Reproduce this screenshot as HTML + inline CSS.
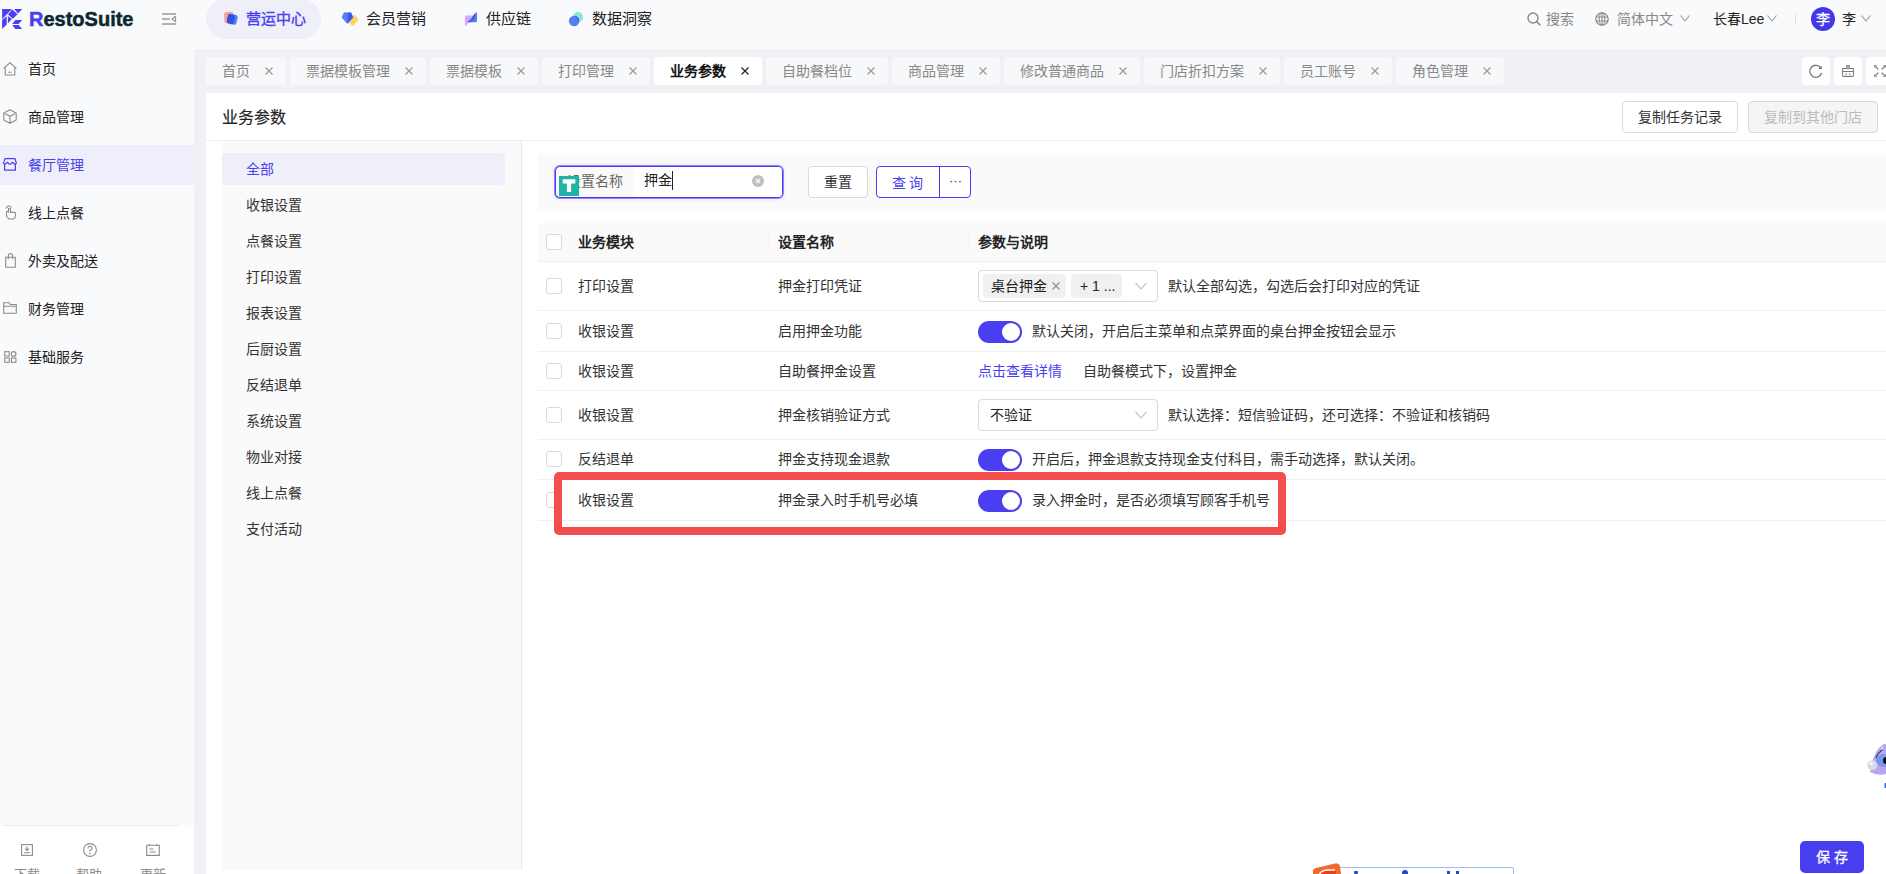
<!DOCTYPE html>
<html lang="zh-CN"><head><meta charset="utf-8">
<style>
*{box-sizing:border-box;margin:0;padding:0}
html,body{width:1886px;height:874px;overflow:hidden}
body{position:relative;background:#f9fafc;font-family:"Liberation Sans",sans-serif;font-size:14px;color:#333;line-height:20px}
.a{position:absolute;white-space:nowrap}
svg{position:absolute;overflow:visible}
/* header */
.logo-t{left:29px;top:6px;font-size:20px;font-weight:bold;color:#0b2730;line-height:26px;letter-spacing:0px;-webkit-text-stroke:0.5px #0b2730}
.logo-t b{-webkit-text-stroke:0.5px #4a3df2}
.logo-t b{color:#4a3ff0}
.pill{left:206px;top:-1px;width:115px;height:40px;border-radius:20px;background:#efeffa}
.nav{top:8px;font-size:15px;line-height:22px;color:#222}
.hr{top:9px;font-size:14px;line-height:20px;color:#888}
/* sidebar */
.side{left:0;top:49px;width:194px;height:776px;background:#f9fafc}
.sitem{left:0;width:194px;height:40px}
.sitem.sel{background:#eeeffb}
.stxt{left:28px;top:10px;font-size:14px;line-height:20px;color:#222}
.sel .stxt{color:#4a3ff0}
/* tabs */
.tabbar{left:194px;top:49px;width:1692px;height:825px;background:#f0f1f5}
.tab{top:57px;height:28px;border-radius:4px;background:#f7f8fa;color:#888;font-size:14px;line-height:28px;padding-left:16px}
.tab.act{background:#fff;color:#111;font-weight:bold}
.tab i{position:absolute;right:13px;top:10px;width:8px;height:8px}
.tool{top:57px;width:28px;height:28px;border-radius:4px;background:#fff}
/* card */
.card{left:206px;top:93px;width:1680px;height:781px;background:#fff;border-radius:4px 0 0 0}
.title{left:222px;top:107px;font-size:16px;line-height:22px;color:#222;-webkit-text-stroke:0.2px #222}
.btn{height:32px;border:1px solid #d9d9d9;border-radius:4px;background:#fff;font-size:14px;line-height:31px;text-align:center;color:#333}
.hline{left:206px;top:140px;width:1680px;height:1px;background:#eeeeee}
.panel{left:222px;top:141px;width:299px;height:729px;background:#fafafa}
.vline{left:521px;top:141px;width:1px;height:729px;background:#e8e8e8}
.cat{left:222px;width:283px;height:32px;border-radius:4px}
.cat.sel{background:#efeffa}
.cat span{position:absolute;left:24px;top:6px;font-size:14px;line-height:20px;color:#333}
.cat.sel span{color:#4a3ff0}
/* filter */
.filter{left:538px;top:153px;width:1348px;height:58px;background:#fafafa;border-radius:4px 0 0 4px}
/* table */
.thead{left:538px;top:223px;width:1348px;height:38px;background:#fafafa;border-radius:4px 0 0 0}
.rline{left:538px;width:1348px;height:1px;background:#efefef}
.cb{width:16px;height:16px;border:1px solid #d9d9d9;border-radius:3px;background:#fff}
.th{font-weight:bold;color:#222}
.td{color:#333}
.sw{left:978px;width:44px;height:22px;border-radius:11px;background:#4a3ff0}
.sw::after{content:"";position:absolute;right:2px;top:2px;width:18px;height:18px;border-radius:50%;background:#fff}
.sel2{left:978px;width:180px;height:32px;border:1px solid #d9d9d9;border-radius:4px;background:#fff}
</style></head><body>

<!-- ===== HEADER ===== -->
<svg style="left:0;top:0" width="30" height="40" viewBox="0 0 30 40">
  <g fill="#4a3df2">
  <path d="M2.1 9H11.9L2.1 19.3Z"/>
  <path d="M14.1 9H22.1L18.1 13.5Z"/>
  <path d="M12.2 9.5L17.6 14.3L12.8 18.8L8 14.5Z"/>
  <path d="M2.1 20.1L6.7 16.2V24.6L2.1 29Z"/>
  <path d="M7.85 15.9L11.86 19.1L7.85 23.6Z"/>
  <path d="M12.2 23.9L15.4 19.9H22.1L18.6 23.9Z"/>
  <path d="M12.2 25H18.6L22.1 28.9H15.4Z"/>
  </g>
</svg>
<div class="a logo-t"><b>R</b>estoSuite</div>
<svg style="left:162px;top:13px" width="14" height="12" viewBox="0 0 14 12">
  <path d="M0 1H14M0 6H8M0 11H14" stroke="#999" stroke-width="1.3" fill="none"/>
  <path d="M13.5 3.5L10 6L13.5 8.5Z" stroke="#999" stroke-width="1.2" fill="none"/>
</svg>

<div class="a pill"></div>
<svg style="left:224px;top:11px" width="16" height="16" viewBox="0 0 16 16">
  <rect x="0.2" y="0.8" width="9.4" height="11.4" rx="2.4" fill="#f9a193" transform="rotate(-4 5 6.5)"/>
  <rect x="3.6" y="3.5" width="9.6" height="9.8" rx="2.4" fill="#5a7cf4" transform="rotate(12 8.4 8.4)"/>
  <rect x="3.2" y="3.4" width="7.2" height="9.8" rx="2.2" fill="#2f52e6" transform="rotate(12 8.4 8.4)"/>
</svg>
<div class="a nav" style="left:246px;color:#4a3ff0;-webkit-text-stroke:0.35px #4a3ff0">营运中心</div>
<svg style="left:342px;top:12px" width="17" height="15" viewBox="0 0 17 15">
  <path d="M12.9 2.9L16.2 7.7L10.5 13.9L7.2 10.3Z" fill="#fdd25a" stroke="#fdd25a" stroke-width="0.6" stroke-linejoin="round"/>
  <path d="M2 0.7H9L11 5.5L5.3 11.6L0 5.5Z" fill="#5a7cf4" stroke="#5a7cf4" stroke-width="0.6" stroke-linejoin="round"/>
  <path d="M6 1L9 0.7L11 5.5L5.3 11.6Z" fill="#3c58ea"/>
</svg>
<div class="a nav" style="left:366px">会员营销</div>
<svg style="left:464px;top:11px" width="15" height="16" viewBox="0 0 15 16">
  <path d="M1 5.6Q1 4.6 2 4.6H8.5L2.6 14.2Q1.8 15.4 1.3 14.3Q1 13.8 1 13Z" fill="#d7a6f6"/>
  <path d="M11.8 1.8Q13 0.7 13 2.5V9.8Q13 11.3 11.5 11.3H4.6Q3 11.3 4.2 10.2Z" fill="#5a7cf4"/>
  <path d="M11.8 1.8L8.5 4.9Q9.5 7 6.5 9.5L4.2 10.2Q3 11.3 4.6 11.3H6Q9 11 10 8Z" fill="#2f52e6" opacity="0.85"/>
</svg>
<div class="a nav" style="left:486px">供应链</div>
<svg style="left:569px;top:12px" width="16" height="16" viewBox="0 0 16 16">
  <circle cx="9" cy="5.1" r="5.1" fill="#8be6d9"/>
  <circle cx="5.1" cy="8.95" r="5.2" fill="#5a7cf4"/>
  <path d="M4.3 3.8A5.1 5.1 0 0 1 9 10.2 A5.2 5.2 0 0 0 10.1 8 A5.1 5.1 0 0 0 4.3 3.8Z" fill="#2f52e6"/>
</svg>
<div class="a nav" style="left:592px">数据洞察</div>

<svg style="left:1527px;top:12px" width="14" height="14" viewBox="0 0 14 14">
  <circle cx="6" cy="6" r="5" stroke="#888" stroke-width="1.4" fill="none"/>
  <path d="M9.6 9.6L13.3 13.3" stroke="#888" stroke-width="1.5"/>
</svg>
<div class="a hr" style="left:1546px">搜索</div>
<svg style="left:1595px;top:12px" width="14" height="14" viewBox="0 0 14 14">
  <circle cx="7" cy="7" r="6.2" stroke="#888" stroke-width="1.2" fill="none"/>
  <ellipse cx="7" cy="7" rx="2.8" ry="6.2" stroke="#888" stroke-width="1" fill="none"/>
  <path d="M1 5H13M1 9H13M7 1V13" stroke="#888" stroke-width="1" fill="none"/>
</svg>
<div class="a hr" style="left:1617px">简体中文</div>
<svg style="left:1680px;top:15px" width="10" height="7" viewBox="0 0 10 7"><path d="M0.5 0.5L5 6L9.5 0.5" stroke="#999" stroke-width="1.1" fill="none"/></svg>
<div class="a hr" style="left:1713px;color:#222">长春Lee</div>
<svg style="left:1767px;top:15px" width="10" height="7" viewBox="0 0 10 7"><path d="M0.5 0.5L5 6L9.5 0.5" stroke="#999" stroke-width="1.1" fill="none"/></svg>
<div class="a" style="left:1795px;top:13px;width:1px;height:12px;background:#e2e2e2"></div>
<div class="a" style="left:1811px;top:7px;width:24px;height:24px;border-radius:50%;background:#4338e8"></div>
<div class="a" style="left:1816px;top:9px;font-size:14px;line-height:20px;color:#fff;-webkit-text-stroke:0.3px #fff">李</div>
<div class="a hr" style="left:1842px;color:#222">李</div>
<svg style="left:1861px;top:15px" width="10" height="7" viewBox="0 0 10 7"><path d="M0.5 0.5L5 6L9.5 0.5" stroke="#999" stroke-width="1.1" fill="none"/></svg>

<!-- ===== SIDEBAR ===== -->
<div class="a side"></div>
<div class="a sitem" style="top:49px"><div class="a stxt">首页</div></div>
<div class="a sitem" style="top:97px"><div class="a stxt">商品管理</div></div>
<div class="a sitem sel" style="top:145px"><div class="a stxt">餐厅管理</div></div>
<div class="a sitem" style="top:193px"><div class="a stxt">线上点餐</div></div>
<div class="a sitem" style="top:241px"><div class="a stxt">外卖及配送</div></div>
<div class="a sitem" style="top:289px"><div class="a stxt">财务管理</div></div>
<div class="a sitem" style="top:337px"><div class="a stxt">基础服务</div></div>
<div class="a" style="left:0;top:825px;width:194px;height:49px;background:#fff"></div>
<div class="a" style="left:2px;top:825px;width:176px;height:1px;background:#ececec"></div>
<svg style="left:3px;top:62px" width="14" height="14" viewBox="0 0 14 14"><g stroke="#8c8c8c" stroke-width="1.1" fill="none"><path d="M0.6 6.3L7 0.8L13.4 6.3M2.2 5V13H11.8V5M5.3 10.3H8.7"/></g></svg>
<svg style="left:3px;top:109px" width="14" height="15" viewBox="0 0 14 15"><g stroke="#8c8c8c" stroke-width="1.1" fill="none"><path d="M7 0.7L13.2 4V11L7 14.3L0.8 11V4Z M0.8 4L7 7.3L13.2 4 M7 7.3V14.3"/></g></svg>
<svg style="left:3px;top:157px" width="14" height="15" viewBox="0 0 14 15"><g stroke="#4a3ff0" stroke-width="1.2" fill="none" stroke-linejoin="round"><path d="M1.2 5L1.6 2.4Q1.8 1.6 2.6 1.6H11.4Q12.2 1.6 12.4 2.4L12.8 5 M1.2 5Q0 5.5 0.7 6.5Q1.5 7.4 2.5 7L4.4 5.3L6.2 7Q6.9 7.5 7.6 7L9.4 5.3L11.3 7Q12.3 7.4 13.1 6.5Q13.8 5.5 12.8 5 M1.6 7V13.2H12.4V7"/></g></svg>
<svg style="left:5px;top:205px" width="12" height="15" viewBox="0 0 12 15"><g stroke="#8c8c8c" stroke-width="1.1" fill="none"><path d="M1 3.5A3 3 0 0 1 6.5 2.5 M3.5 13.5Q1.5 12 1.5 9.5V6.5Q2.5 5.8 3.5 6.8V3.8Q4.5 3 5.5 3.8V7.5Q8 6.5 10.5 8V10.5Q10.5 13 8.5 14H4Z"/></g></svg>
<svg style="left:5px;top:253px" width="11" height="15" viewBox="0 0 11 15"><g stroke="#8c8c8c" stroke-width="1.1" fill="none"><path d="M0.7 4.3H10.3V14.2H0.7Z M3.3 6.3V2.7A2.2 2.2 0 0 1 7.7 2.7V6.3"/></g></svg>
<svg style="left:3px;top:302px" width="14" height="12" viewBox="0 0 14 12"><g stroke="#8c8c8c" stroke-width="1.1" fill="none"><path d="M0.7 0.8H6L7.3 2.5H13.3V11.2H0.7Z M0.7 4.3H13.3"/></g></svg>
<svg style="left:4px;top:351px" width="13" height="12" viewBox="0 0 13 12"><g stroke="#8c8c8c" stroke-width="1.1" fill="none"><rect x="0.7" y="0.7" width="4.5" height="4.3"/><circle cx="9.6" cy="2.9" r="2.3"/><rect x="0.7" y="7" width="4.5" height="4.3"/><rect x="7.4" y="7" width="4.5" height="4.3"/></g></svg>
<svg style="left:21px;top:844px" width="12" height="12" viewBox="0 0 12 12"><g stroke="#8c8c8c" stroke-width="1.1" fill="none"><rect x="0.6" y="0.6" width="10.8" height="10.8"/><path d="M6 2.5V6.3M4 4.6L6 6.5L8 4.6M3 8.8H9"/></g></svg>
<svg style="left:83px;top:843px" width="14" height="14" viewBox="0 0 14 14"><g stroke="#8c8c8c" stroke-width="1.1" fill="none"><circle cx="7" cy="7" r="6.4"/><path d="M5 5.3A2 2 0 1 1 7 7.2V8.6"/></g><circle cx="7" cy="10.6" r="0.8" fill="#8c8c8c"/></svg>
<svg style="left:146px;top:844px" width="14" height="12" viewBox="0 0 14 12"><g stroke="#8c8c8c" stroke-width="1.1" fill="none"><path d="M0.7 1.3H13.3V11.4H0.7Z M3.3 0V2 M10.7 0V2 M3.5 5H7.5 M3.5 8H10"/></g></svg>
<div class="a" style="left:14px;top:866px;font-size:13px;line-height:18px;color:#8c8c8c">下载</div>
<div class="a" style="left:76px;top:866px;font-size:13px;line-height:18px;color:#8c8c8c">帮助</div>
<div class="a" style="left:140px;top:866px;font-size:13px;line-height:18px;color:#8c8c8c">更新</div>

<!-- ===== TABS ===== -->
<div class="a tabbar"></div>
<div class="a tab" style="left:206px;width:80px">首页<svg style="right:13px;top:10px" width="8" height="8" viewBox="0 0 8 8"><path d="M0.5 0.5L7.5 7.5M7.5 0.5L0.5 7.5" stroke="#999" stroke-width="1.2"/></svg></div>
<div class="a tab" style="left:290px;width:136px">票据模板管理<svg style="right:13px;top:10px" width="8" height="8" viewBox="0 0 8 8"><path d="M0.5 0.5L7.5 7.5M7.5 0.5L0.5 7.5" stroke="#999" stroke-width="1.2"/></svg></div>
<div class="a tab" style="left:430px;width:108px">票据模板<svg style="right:13px;top:10px" width="8" height="8" viewBox="0 0 8 8"><path d="M0.5 0.5L7.5 7.5M7.5 0.5L0.5 7.5" stroke="#999" stroke-width="1.2"/></svg></div>
<div class="a tab" style="left:542px;width:108px">打印管理<svg style="right:13px;top:10px" width="8" height="8" viewBox="0 0 8 8"><path d="M0.5 0.5L7.5 7.5M7.5 0.5L0.5 7.5" stroke="#999" stroke-width="1.2"/></svg></div>
<div class="a tab act" style="left:654px;width:108px">业务参数<svg style="right:13px;top:10px" width="8" height="8" viewBox="0 0 8 8"><path d="M0.5 0.5L7.5 7.5M7.5 0.5L0.5 7.5" stroke="#222" stroke-width="1.2"/></svg></div>
<div class="a tab" style="left:766px;width:122px">自助餐档位<svg style="right:13px;top:10px" width="8" height="8" viewBox="0 0 8 8"><path d="M0.5 0.5L7.5 7.5M7.5 0.5L0.5 7.5" stroke="#999" stroke-width="1.2"/></svg></div>
<div class="a tab" style="left:892px;width:108px">商品管理<svg style="right:13px;top:10px" width="8" height="8" viewBox="0 0 8 8"><path d="M0.5 0.5L7.5 7.5M7.5 0.5L0.5 7.5" stroke="#999" stroke-width="1.2"/></svg></div>
<div class="a tab" style="left:1004px;width:136px">修改普通商品<svg style="right:13px;top:10px" width="8" height="8" viewBox="0 0 8 8"><path d="M0.5 0.5L7.5 7.5M7.5 0.5L0.5 7.5" stroke="#999" stroke-width="1.2"/></svg></div>
<div class="a tab" style="left:1144px;width:136px">门店折扣方案<svg style="right:13px;top:10px" width="8" height="8" viewBox="0 0 8 8"><path d="M0.5 0.5L7.5 7.5M7.5 0.5L0.5 7.5" stroke="#999" stroke-width="1.2"/></svg></div>
<div class="a tab" style="left:1284px;width:108px">员工账号<svg style="right:13px;top:10px" width="8" height="8" viewBox="0 0 8 8"><path d="M0.5 0.5L7.5 7.5M7.5 0.5L0.5 7.5" stroke="#999" stroke-width="1.2"/></svg></div>
<div class="a tab" style="left:1396px;width:108px">角色管理<svg style="right:13px;top:10px" width="8" height="8" viewBox="0 0 8 8"><path d="M0.5 0.5L7.5 7.5M7.5 0.5L0.5 7.5" stroke="#999" stroke-width="1.2"/></svg></div>

<div class="a tool" style="left:1802px"><svg style="left:7px;top:7px" width="14" height="14" viewBox="0 0 14 14">
  <path d="M12 4.2A6 6 0 1 0 12.6 9" stroke="#777" stroke-width="1.3" fill="none"/>
  <path d="M12.8 1.5V5H9.3Z" fill="#777"/></svg></div>
<div class="a tool" style="left:1834px"><svg style="left:8px;top:8px" width="12" height="12" viewBox="0 0 12 12">
  <rect x="4.7" y="0.5" width="2.6" height="3" fill="#c4c4c4" stroke="#7a7a7a" stroke-width="0.9"/>
  <rect x="0.65" y="3.5" width="10.7" height="3" fill="#fff" stroke="#7a7a7a" stroke-width="1"/>
  <path d="M0.65 6.5V11.5H11.35V6.5" stroke="#7a7a7a" stroke-width="1" fill="none"/>
  <rect x="3.2" y="8.1" width="1.5" height="2.8" fill="#b5b5b5"/><rect x="7.2" y="8.1" width="1.5" height="2.8" fill="#b5b5b5"/></svg></div>
<div class="a tool" style="left:1866px"><svg style="left:8px;top:8px" width="12" height="12" viewBox="0 0 12 12">
  <g stroke="#6f6f6f" stroke-width="1.2" fill="none"><path d="M0.8 0.8L4.3 4.3M7.7 4.3L11.2 0.8M0.8 11.2L4.3 7.7M7.7 7.7L11.2 11.2"/></g>
  <g fill="#9a9a9a"><path d="M0 0H3.3L0 3.3Z M12 0H8.7L12 3.3Z M0 12H3.3L0 8.7Z M12 12H8.7L12 8.7Z"/></g></svg></div>

<!-- ===== CARD ===== -->
<div class="a card"></div>
<div class="a title">业务参数</div>
<div class="a btn" style="left:1622px;top:101px;width:116px">复制任务记录</div>
<div class="a btn" style="left:1748px;top:101px;width:130px;background:#f5f5f5;color:#bbb">复制到其他门店</div>
<div class="a hline"></div>
<div class="a panel"></div>
<div class="a vline"></div>
<div class="a cat sel" style="top:153px"><span>全部</span></div>
<div class="a cat" style="top:189px"><span>收银设置</span></div>
<div class="a cat" style="top:225px"><span>点餐设置</span></div>
<div class="a cat" style="top:261px"><span>打印设置</span></div>
<div class="a cat" style="top:297px"><span>报表设置</span></div>
<div class="a cat" style="top:333px"><span>后厨设置</span></div>
<div class="a cat" style="top:369px"><span>反结退单</span></div>
<div class="a cat" style="top:405px"><span>系统设置</span></div>
<div class="a cat" style="top:441px"><span>物业对接</span></div>
<div class="a cat" style="top:477px"><span>线上点餐</span></div>
<div class="a cat" style="top:513px"><span>支付活动</span></div>

<!-- filter -->
<div class="a filter"></div>
<div class="a" style="left:552px;top:163px;width:234px;height:38px;border-radius:6px;background:#f3f2fd"></div>
<div class="a" style="left:555px;top:166px;width:228px;height:32px;border:1px solid #4a3ff0;box-shadow:0 0 0 1px rgba(74,63,240,0.6);border-radius:5px;background:#fafafa"></div>
<div class="a" style="left:633px;top:167px;width:149px;height:30px;border-radius:4px;background:#fff"></div>
<div class="a" style="left:567px;top:171px;color:#666">设置名称</div>
<div class="a" style="left:559px;top:176px;width:20px;height:20px;background:#22b3a6"></div>
<svg style="left:559px;top:176px" width="20" height="20" viewBox="0 0 20 20"><path d="M3.7 3.2H16.3V7.4H12.1V16H7.9V7.4H3.7Z" fill="#fff"/></svg>
<div class="a" style="left:644px;top:170px;color:#222">押金</div>
<div class="a" style="left:672px;top:171px;width:1px;height:19px;background:#222"></div>
<div class="a" style="left:752px;top:175px;width:12px;height:12px;border-radius:50%;background:#bfbfbf"></div>
<svg style="left:752px;top:175px" width="12" height="12" viewBox="0 0 12 12"><path d="M4 4L8 8M8 4L4 8" stroke="#fff" stroke-width="1.2"/></svg>
<div class="a btn" style="left:808px;top:166px;width:60px">重置</div>
<div class="a btn" style="left:876px;top:166px;width:95px;border-color:#4a3ff0"></div>
<div class="a" style="left:939px;top:167px;width:1px;height:30px;background:#4a3ff0"></div>
<div class="a" style="left:892px;top:173px;color:#4a3ff0;letter-spacing:3px">查询</div>
<div class="a" style="left:949px;top:171px;color:#333;font-size:13px">···</div>

<!-- table -->
<div class="a thead"></div>
<div class="a cb" style="left:546px;top:234px"></div>
<div class="a th" style="left:578px;top:232px">业务模块</div>
<div class="a" style="left:769px;top:230px;width:1px;height:22px;background:#f0f0f0"></div>
<div class="a th" style="left:778px;top:232px">设置名称</div>
<div class="a" style="left:969px;top:230px;width:1px;height:22px;background:#f0f0f0"></div>
<div class="a th" style="left:978px;top:232px">参数与说明</div>
<div class="a rline" style="top:261px"></div>

<div class="a cb" style="left:546px;top:278px"></div>
<div class="a td" style="left:578px;top:276px">打印设置</div>
<div class="a td" style="left:778px;top:276px">押金打印凭证</div>
<div class="a sel2" style="top:270px"></div>
<div class="a" style="left:983px;top:274px;width:83px;height:24px;border-radius:4px;background:#f0f0f0"></div>
<div class="a td" style="left:991px;top:276px;color:#222">桌台押金</div>
<svg style="left:1052px;top:282px" width="8" height="8" viewBox="0 0 8 8"><path d="M0.5 0.5L7.5 7.5M7.5 0.5L0.5 7.5" stroke="#888" stroke-width="1.1"/></svg>
<div class="a" style="left:1071px;top:274px;width:51px;height:24px;border-radius:4px;background:#f0f0f0"></div>
<div class="a td" style="left:1080px;top:276px;color:#222">+ 1 ...</div>
<svg style="left:1135px;top:282px" width="12" height="8" viewBox="0 0 12 8"><path d="M0.5 0.8L6 7L11.5 0.8" stroke="#bbb" stroke-width="1.1" fill="none"/></svg>
<div class="a td" style="left:1168px;top:276px">默认全部勾选，勾选后会打印对应的凭证</div>
<div class="a rline" style="top:310px"></div>

<div class="a cb" style="left:546px;top:323px"></div>
<div class="a td" style="left:578px;top:321px">收银设置</div>
<div class="a td" style="left:778px;top:321px">启用押金功能</div>
<div class="a sw" style="top:321px"></div>
<div class="a td" style="left:1032px;top:321px">默认关闭，开启后主菜单和点菜界面的桌台押金按钮会显示</div>
<div class="a rline" style="top:351px"></div>

<div class="a cb" style="left:546px;top:363px"></div>
<div class="a td" style="left:578px;top:361px">收银设置</div>
<div class="a td" style="left:778px;top:361px">自助餐押金设置</div>
<div class="a td" style="left:978px;top:361px;color:#4a3ff0">点击查看详情</div>
<div class="a td" style="left:1083px;top:361px">自助餐模式下，设置押金</div>
<div class="a rline" style="top:390px"></div>

<div class="a cb" style="left:546px;top:407px"></div>
<div class="a td" style="left:578px;top:405px">收银设置</div>
<div class="a td" style="left:778px;top:405px">押金核销验证方式</div>
<div class="a sel2" style="top:399px"></div>
<div class="a td" style="left:990px;top:405px;color:#222">不验证</div>
<svg style="left:1135px;top:411px" width="12" height="8" viewBox="0 0 12 8"><path d="M0.5 0.8L6 7L11.5 0.8" stroke="#bbb" stroke-width="1.1" fill="none"/></svg>
<div class="a td" style="left:1168px;top:405px">默认选择：短信验证码，还可选择：不验证和核销码</div>
<div class="a rline" style="top:439px"></div>

<div class="a cb" style="left:546px;top:451px"></div>
<div class="a td" style="left:578px;top:449px">反结退单</div>
<div class="a td" style="left:778px;top:449px">押金支持现金退款</div>
<div class="a sw" style="top:449px"></div>
<div class="a td" style="left:1032px;top:449px">开启后，押金退款支持现金支付科目，需手动选择，默认关闭。</div>
<div class="a rline" style="top:479px"></div>

<div class="a cb" style="left:546px;top:492px"></div>
<div class="a td" style="left:578px;top:490px">收银设置</div>
<div class="a td" style="left:778px;top:490px">押金录入时手机号必填</div>
<div class="a sw" style="top:490px"></div>
<div class="a td" style="left:1032px;top:490px">录入押金时，是否必须填写顾客手机号</div>
<div class="a rline" style="top:520px"></div>

<!-- red highlight -->
<div class="a" style="left:554px;top:472px;width:732px;height:63px;border:8px solid #f24e4e;border-radius:5px"></div>

<!-- mascot -->
<svg style="left:1856px;top:730px" width="30" height="70" viewBox="0 0 30 70">
  <path d="M14 42Q17 22 26 15Q28 14 30 14V44Q21 46 14 42Z" fill="#b8a6ec"/>
  <path d="M25 15Q27 17 26 22" stroke="#e8e4fa" stroke-width="1.2" fill="none"/>
  <ellipse cx="28" cy="30.5" rx="8" ry="6.5" fill="#7896ee"/>
  <path d="M20 28Q22 22 27 20" stroke="#27306a" stroke-width="1.1" fill="none"/>
  <ellipse cx="30" cy="30.5" rx="3" ry="3.5" fill="#111"/>
  <circle cx="16.4" cy="35.2" r="5" fill="#d8d8e6"/>
  <circle cx="15.2" cy="33.6" r="2" fill="#f2f2f8"/>
  <rect x="28.5" y="53" width="2" height="5" rx="1" fill="#2f5ff0"/>
</svg>
<!-- IME bar -->
<div class="a" style="left:1338px;top:867px;width:176px;height:10px;border:1px solid #9dbbe8;border-radius:2px;background:#fff"></div>
<svg style="left:1310px;top:861px" width="34" height="14" viewBox="0 0 34 14">
  <path d="M3 11Q2 8 6 7L25 2.5Q29 1.8 30 5L31 13H3Z" fill="#f26a2e"/>
  <path d="M10 14Q12 10 18 10H26V14Z" fill="#e8401a"/>
  <path d="M9 14Q11 9 18 9H25" stroke="#fff" stroke-width="1.5" fill="none"/>
</svg>
<div class="a" style="left:1354px;top:871px;width:4px;height:3px;background:#1f4fbf;border-radius:1px"></div>
<div class="a" style="left:1402px;top:870px;width:6px;height:4px;background:#1f4fbf;border-radius:3px 3px 0 0"></div>
<div class="a" style="left:1447px;top:871px;width:3px;height:3px;background:#1f4fbf"></div>
<div class="a" style="left:1456px;top:871px;width:3px;height:3px;background:#1f4fbf"></div>

<!-- save button -->
<div class="a" style="left:1800px;top:841px;width:64px;height:32px;border-radius:5px;background:#4a3ff0;color:#fff;text-align:center;line-height:32px;letter-spacing:4px;padding-left:4px;-webkit-text-stroke:0.3px #fff">保存</div>

</body></html>
